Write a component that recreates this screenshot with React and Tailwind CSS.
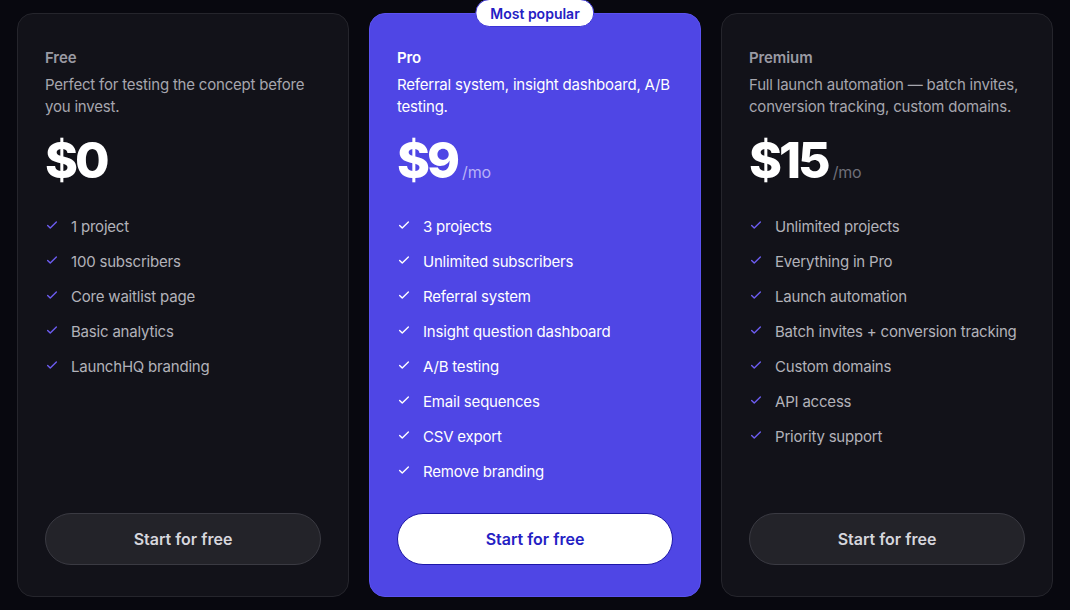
import React from "react";

const Check = ({ className }) => (
  <svg viewBox="0 0 16 16" className={className} fill="none" stroke="currentColor" strokeWidth="1.6" strokeLinecap="round" strokeLinejoin="round">
    <path d="M3 8.5l3 3 7-7" />
  </svg>
);

const plans = [
  {
    name: "Free",
    desc: "Perfect for testing the concept before you invest.",
    price: "$0",
    mo: false,
    features: ["1 project", "100 subscribers", "Core waitlist page", "Basic analytics", "LaunchHQ branding"],
  },
  {
    name: "Pro",
    desc: "Referral system, insight dashboard, A/B testing.",
    price: "$9",
    mo: true,
    popular: true,
    features: [
      "3 projects",
      "Unlimited subscribers",
      "Referral system",
      "Insight question dashboard",
      "A/B testing",
      "Email sequences",
      "CSV export",
      "Remove branding",
    ],
  },
  {
    name: "Premium",
    desc: "Full launch automation — batch invites, conversion tracking, custom domains.",
    price: "$15",
    mo: true,
    features: [
      "Unlimited projects",
      "Everything in Pro",
      "Launch automation",
      "Batch invites + conversion tracking",
      "Custom domains",
      "API access",
      "Priority support",
    ],
  },
];

function Card({ p }) {
  const pop = p.popular;
  return (
    <div
      className={
        "relative flex flex-col rounded-[16px] border px-[27px] pt-[34px] pb-[31px] " +
        (pop ? "bg-[#4f46e5] border-[#5b52f0]" : "bg-[#121219] border-[#25252c]")
      }
    >
      {pop && (
        <div className="absolute left-1/2 top-[-15px] -translate-x-1/2 rounded-full bg-white px-[14px] h-[28px] flex items-center text-[14px] font-semibold text-[#2420c4] border border-[#3b33d6]">
          Most popular
        </div>
      )}
      <div className={"text-[15px] leading-[20px] font-semibold tracking-[-0.1px] " + (pop ? "text-white" : "text-[#9a9aa3]")}>{p.name}</div>
      <div className={"mt-[6px] text-[15px] leading-[22px] tracking-[-0.2px] " + (pop ? "text-white" : "text-[#a6a6ae]")}>{p.desc}</div>
      <div className="mt-[14px] flex items-baseline h-[56px]">
        <span className="text-[50px] leading-[56px] font-extrabold tracking-[-3px] text-white">{p.price}</span>
        {p.mo && (
          <span className={"ml-[5px] text-[16px] tracking-[-0.2px] " + (pop ? "text-[#b8b2f7]" : "text-[#6f6f78]")}>/mo</span>
        )}
      </div>
      <ul className="mt-[22px] flex flex-col">
        {p.features.map((f) => (
          <li key={f} className="flex items-center h-[35px]">
            <Check className={"w-[14px] h-[14px] mb-[6px] " + (pop ? "text-white" : "text-[#6c5cf0]")} />
            <span className={"ml-[12px] text-[15px] tracking-[-0.2px] " + (pop ? "text-white" : "text-[#b2b2ba]")}>{f}</span>
          </li>
        ))}
      </ul>
      <button
        className={
          "mt-auto h-[52px] w-full rounded-full text-[16px] font-semibold " +
          (pop
            ? "bg-white text-[#2420c4] border border-[#1d17a8]"
            : "bg-[#232329] text-[#d6d6dc] border border-[#3a3a42]")
        }
      >
        Start for free
      </button>
    </div>
  );
}

export default function App() {
  return (
    <div
      className="w-[1070px] h-[610px] bg-[#08080f] px-[17px] pt-[13px] pb-[13px] grid grid-cols-3 gap-[20px]"
      style={{ fontFamily: "Inter, 'Noto Sans', sans-serif" }}
    >
      {plans.map((p) => (
        <Card key={p.name} p={p} />
      ))}
    </div>
  );
}
